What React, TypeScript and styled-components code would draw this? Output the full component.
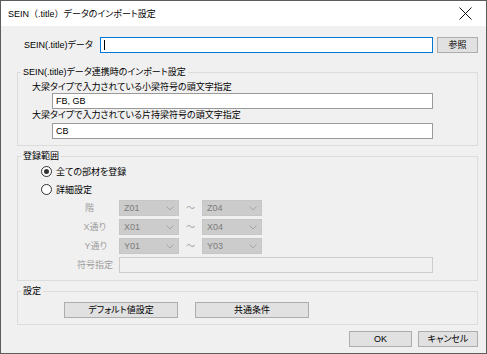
import React, { FC } from "react";
import styled, { createGlobalStyle } from "styled-components";

const GlobalStyle = createGlobalStyle`
  html, body {
    margin: 0;
    padding: 0;
    background: #f0f0f0;
  }
  * {
    box-sizing: border-box;
  }
`;

const Window = styled.div`
  width: 487px;
  height: 354px;
  border: 1px solid #5c5c5c;
  background: #f0f0f0;
  display: flex;
  flex-direction: column;
  font-family: "Liberation Sans", "Noto Sans CJK JP", sans-serif;
  font-size: 9px;
  font-feature-settings: "palt";
  color: #000;
`;

const TitleBar = styled.div`
  height: 25px;
  flex: none;
  background: #fff;
  display: flex;
  align-items: center;
  justify-content: space-between;
  padding: 0 14px 0 7px;
`;

const TitleText = styled.span`
  font-size: 9px;
  .wide {
    font-feature-settings: normal;
  }
`;

const Body = styled.div`
  flex: 1;
  display: flex;
  flex-direction: column;
  padding: 11px 8px 0 16px;
`;

const FileRow = styled.div`
  display: flex;
  align-items: center;
  height: 16px;
`;

const FileLabel = styled.span`
  width: 76px;
  margin-left: 7px;
  line-height: 12px;
  white-space: nowrap;
`;

const TextBox = styled.div<{ $focused?: boolean; $disabled?: boolean }>`
  height: 16px;
  flex: 1;
  border: 1px solid
    ${(p) => (p.$focused ? "#0078d7" : p.$disabled ? "#cccccc" : "#9a9a9a")};
  background: ${(p) => (p.$disabled ? "#f0f0f0" : "#fff")};
  display: flex;
  align-items: center;
  padding-left: 3px;
  line-height: 12px;
`;

const Caret = styled.span`
  width: 1px;
  height: 10px;
  background: #000;
`;

const Button = styled.div<{ $width: number }>`
  width: ${(p) => p.$width}px;
  height: 16px;
  flex: none;
  border: 1px solid #adadad;
  background: #e1e1e1;
  display: flex;
  align-items: center;
  justify-content: center;
  line-height: 12px;
`;

const BrowseButton = styled(Button)`
  margin-left: 4px;
`;

const Group = styled.fieldset<{ $top: number }>`
  margin: ${(p) => p.$top}px 0 0 0;
  padding: 0;
  border: 1px solid #dcdcdc;
  min-width: 0;
`;

const Legend = styled.legend`
  margin-left: 3px;
  padding: 0 2px;
  font-size: 9px;
  line-height: 12px;
`;

const ImportBody = styled.div`
  padding: 3px 0 6px 14px;
  display: flex;
  flex-direction: column;
`;

const FieldLabel = styled.div`
  line-height: 12px;
  height: 12px;
`;

const IndentBox = styled.div<{ $gap: number }>`
  margin: ${(p) => p.$gap}px 0 0 20px;
  width: 381px;
  display: flex;
`;

const RangeBody = styled.div`
  padding: 2px 0 7px 23px;
  display: flex;
  flex-direction: column;
`;

const RadioRow = styled.div<{ $gap: number }>`
  display: flex;
  align-items: center;
  gap: 4px;
  height: 14px;
  margin-top: ${(p) => p.$gap}px;
`;

const RadioMark = styled.span<{ $checked?: boolean }>`
  width: 11px;
  height: 11px;
  border-radius: 50%;
  border: 1px solid #333;
  background: #fff;
  display: flex;
  align-items: center;
  justify-content: center;
  &::after {
    content: "";
    width: 5px;
    height: 5px;
    border-radius: 50%;
    background: ${(p) => (p.$checked ? "#333" : "transparent")};
  }
`;

const RangeGrid = styled.div`
  margin-top: 4px;
  display: grid;
  grid-template-columns: 78px 60px 23px 60px;
  grid-auto-rows: 16px;
  row-gap: 3px;
  align-items: center;
`;

const DimLabel = styled.span<{ $inset: number }>`
  text-align: right;
  padding-right: ${(p) => p.$inset}px;
  color: #9d9d9d;
  line-height: 12px;
  white-space: nowrap;
`;

const Combo = styled.div`
  height: 16px;
  background: #cccccc;
  border: 1px solid #c6c6c6;
  color: #7c7c7c;
  display: flex;
  align-items: center;
  justify-content: space-between;
  padding: 0 4px 0 4px;
  line-height: 12px;
`;

const Tilde = styled.span`
  text-align: center;
  color: #a0a0a0;
  line-height: 12px;
`;

const WideCell = styled.div`
  grid-column: 2 / span 3;
  width: 314px;
  display: flex;
`;

const SettingsBody = styled.div`
  padding: 5px 0 6px 46px;
  display: flex;
  gap: 17px;
`;

const Footer = styled.div`
  margin-top: 6px;
  display: flex;
  justify-content: flex-end;
  gap: 6px;
`;

const Chevron: FC = () => (
  <svg width="8" height="5" viewBox="0 0 8 5">
    <path d="M0.5 0.5 L4 4 L7.5 0.5" fill="none" stroke="#a6a6a6" strokeWidth="1" />
  </svg>
);

const CloseIcon: FC = () => (
  <svg width="13" height="13" viewBox="0 0 13 13">
    <path d="M0.5 0.5 L12.5 12.5 M12.5 0.5 L0.5 12.5" stroke="#111" strokeWidth="1" />
  </svg>
);

const rangeRows = [
  { label: "階", inset: 25, from: "Z01", to: "Z04" },
  { label: "X通り", inset: 13, from: "X01", to: "X04" },
  { label: "Y通り", inset: 12, from: "Y01", to: "Y03" },
];

const App: FC = () => {
  return (
    <>
      <GlobalStyle />
      <Window>
        <TitleBar>
          <TitleText>
            <span className="wide">SEIN（.title）</span>データのインポート設定
          </TitleText>
          <CloseIcon />
        </TitleBar>
        <Body>
          <FileRow>
            <FileLabel>SEIN(.title)データ</FileLabel>
            <TextBox $focused>
              <Caret />
            </TextBox>
            <BrowseButton $width={41}>参照</BrowseButton>
          </FileRow>

          <Group $top={13}>
            <Legend>SEIN(.title)データ連携時のインポート設定</Legend>
            <ImportBody>
              <FieldLabel>大梁タイプで入力されている小梁符号の頭文字指定</FieldLabel>
              <IndentBox $gap={0}>
                <TextBox>FB, GB</TextBox>
              </IndentBox>
              <FieldLabel>大梁タイプで入力されている片持梁符号の頭文字指定</FieldLabel>
              <IndentBox $gap={2}>
                <TextBox>CB</TextBox>
              </IndentBox>
            </ImportBody>
          </Group>

          <Group $top={4}>
            <Legend>登録範囲</Legend>
            <RangeBody>
              <RadioRow $gap={0}>
                <RadioMark $checked />
                <span>全ての部材を登録</span>
              </RadioRow>
              <RadioRow $gap={4}>
                <RadioMark />
                <span>詳細設定</span>
              </RadioRow>
              <RangeGrid>
                {rangeRows.map((r) => (
                  <React.Fragment key={r.label}>
                    <DimLabel $inset={r.inset}>{r.label}</DimLabel>
                    <Combo>
                      {r.from}
                      <Chevron />
                    </Combo>
                    <Tilde>～</Tilde>
                    <Combo>
                      {r.to}
                      <Chevron />
                    </Combo>
                  </React.Fragment>
                ))}
                <DimLabel $inset={6}>符号指定</DimLabel>
                <WideCell>
                  <TextBox $disabled />
                </WideCell>
              </RangeGrid>
            </RangeBody>
          </Group>

          <Group $top={4}>
            <Legend>設定</Legend>
            <SettingsBody>
              <Button $width={114}>デフォルト値設定</Button>
              <Button $width={114}>共通条件</Button>
            </SettingsBody>
          </Group>

          <Footer>
            <Button $width={63}>OK</Button>
            <Button $width={60}>キャンセル</Button>
          </Footer>
        </Body>
      </Window>
    </>
  );
};

export default App;
